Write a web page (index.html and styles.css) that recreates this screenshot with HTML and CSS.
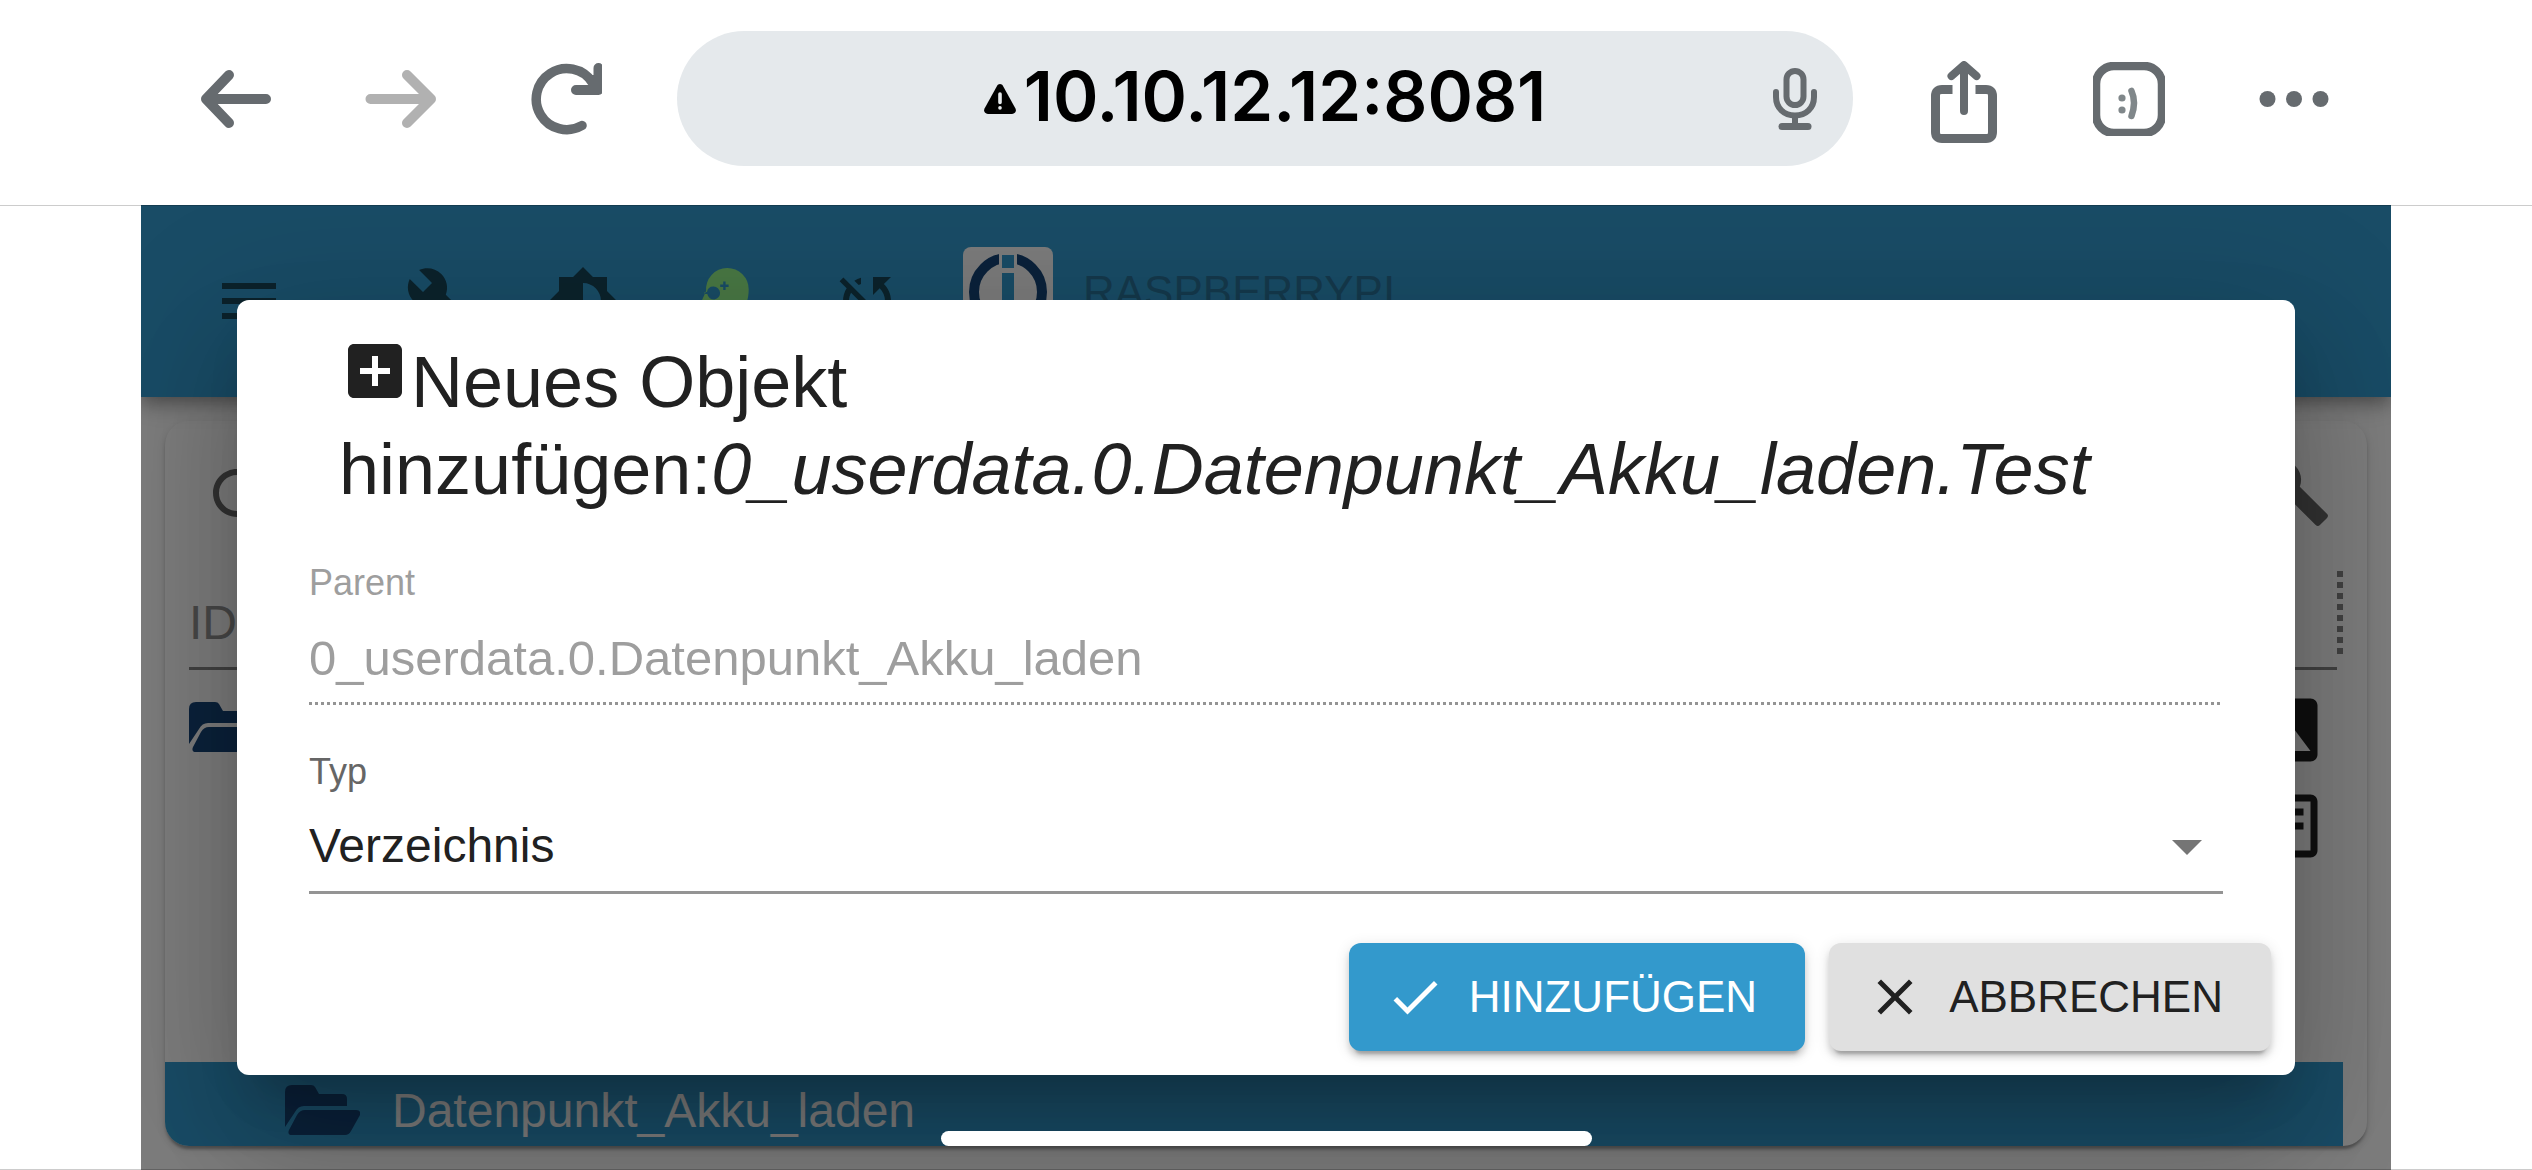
FILE: index.html
```html
<!DOCTYPE html>
<html lang="de">
<head>
<meta charset="utf-8">
<meta name="viewport" content="width=device-width, initial-scale=1">
<title>Neues Objekt hinzufügen</title>
<link rel="stylesheet" href="styles.css">
</head>
<body>
<header class="browser-bar">
  <nav class="browser-group" aria-label="Navigation">
    <button class="browser-button" type="button" aria-label="Zurück">
      <svg viewBox="0 0 72 72" class="line-icon"><path d="M66 36H6M29 12L6 36l23 24" /></svg>
    </button>
    <button class="browser-button is-inactive" type="button" aria-label="Vorwärts">
      <svg viewBox="0 0 72 72" class="line-icon"><path d="M5.500 36H66M42 12l24 24-24 24" /></svg>
    </button>
    <button class="browser-button" type="button" aria-label="Neu laden">
      <svg viewBox="0 0 72 72" class="line-icon"><path d="M52 62.500A30.500 30.500 0 1 1 62 19" stroke-width="9.500"/><path d="M46 27h22.500V5" /><path d="M60 12l9 0v16l-9 0z" fill="currentColor" stroke="none"/></svg>
    </button>
  </nav>
  <div class="address">
    <button class="address-text" type="button">
      <svg class="warning-icon" viewBox="0 0 32 30" aria-hidden="true"><path d="M16 0c1.300 0 2.300.7 3 1.900l12.300 22.300c1.500 2.800-.1 5.800-3.200 5.800H3.900C.8 30-.8 27 .7 24.200L13 1.900C13.700.7 14.700 0 16 0z"/><path d="M16 10v8.500M16 23.700v.2" stroke="#e5e9ec" stroke-width="3.600" stroke-linecap="round"/></svg>
      <span>10.10.12.12:8081</span>
    </button>
    <button class="mic-button" type="button" aria-label="Spracheingabe">
      <svg viewBox="0 0 44 62"><g fill="none" stroke="currentColor" stroke-width="6" stroke-linecap="round"><rect x="13.500" y="3" width="17" height="34" rx="8.500"/><path d="M3 24v5c0 11 8 18.500 19 18.500S41 40 41 29v-5M22 48v8"/><path d="M9 58.500h26" stroke-width="7"/></g></svg>
    </button>
  </div>
  <div class="browser-group">
    <button class="browser-button" type="button" aria-label="Teilen">
      <svg viewBox="0 0 72 82" class="share-icon"><path d="M24.500 28.500H14q-6.500 0-6.500 6.500v36q0 6.500 6.500 6.500h44q6.500 0 6.500-6.500V35q0-6.500-6.500-6.500H47.500" stroke-width="9" stroke-linecap="butt"/><path d="M36 50V6M23.500 15L36 4l12.500 11" stroke-width="8"/></svg>
    </button>
    <button class="browser-button" type="button" aria-label="Tabs">
      <svg viewBox="1 1 72 74"><rect x="4" y="5" width="66" height="67" rx="18" fill="none" stroke="currentColor" stroke-width="8.500"/><g fill="#80878a"><circle cx="30" cy="37" r="3.600"/><circle cx="30" cy="49" r="3.600"/><path d="M39.500 30q5 11 0 25" fill="none" stroke="#80878a" stroke-width="6.500" stroke-linecap="round"/></g></svg>
    </button>
    <button class="browser-button" type="button" aria-label="Mehr">
      <svg viewBox="0 0 72 72"><circle cx="9.500" cy="36" r="8"/><circle cx="36" cy="36" r="8"/><circle cx="62.500" cy="36" r="8"/></svg>
    </button>
  </div>
</header>

<main class="viewport">
  <div class="app">
    <header class="app-bar">
      <button class="icon-button" type="button" aria-label="Menü"><svg viewBox="0 0 24 24"><path d="M3 18h18v-2H3v2zm0-5h18v-2H3v2zm0-7v2h18V6H3z"/></svg></button>
      <div class="app-tools">
        <button class="icon-button" type="button" aria-label="Einstellungen"><svg viewBox="0 0 24 24"><path d="M22.700 19l-9.100-9.100c.9-2.300.4-5-1.500-6.900-2-2-5-2.400-7.400-1.300L9 6 6 9 1.600 4.700C.4 7.100.9 10.100 2.900 12.100c1.900 1.900 4.600 2.400 6.900 1.500l9.100 9.100c.4.4 1 .4 1.400 0l2.300-2.300c.5-.4.5-1.100.1-1.400z"/></svg></button>
        <button class="icon-button" type="button" aria-label="Farbschema"><svg viewBox="0 0 24 24"><path d="M20 15.310L23.310 12 20 8.690V4h-4.690L12 .69 8.690 4H4v4.690L.69 12 4 15.310V20h4.690L12 23.310 15.310 20H20v-4.690zM12 18V6c3.310 0 6 2.690 6 6s-2.690 6-6 6z"/></svg></button>
        <button class="icon-button is-expert" type="button" aria-label="Expertenmodus"><svg viewBox="0 0 24 24"><path fill-rule="evenodd" d="M12.700 1a7.100 7.100 0 0 0-7 7.700L4 12.500c-.2.500 0 1 .6 1H6v3c0 1.100.9 2 2 2h1V23h8v-6.500c1.700-1.800 2.900-4.800 2.900-8.300A7.100 7.100 0 0 0 12.700 1zM8.100 7.200a2.150 2.150 0 1 1-2 2.500H5.200V9h.8a2.150 2.150 0 0 1 2.100-1.800zM11.400 5.500h.8v1h1v.8h-1v1h-.8v-1h-1v-.8h1z"/></svg></button>
        <button class="icon-button" type="button" aria-label="Synchronisierung aus"><svg viewBox="0 0 24 24"><path d="M10 6.350V4.260c-.8.21-1.550.54-2.230.96l1.460 1.460c.25-.12.5-.24.77-.33zm-7.140-.94l2.360 2.360C4.450 8.990 4 10.440 4 12c0 2.210.91 4.200 2.360 5.640L4 20h6v-6l-2.240 2.240C6.680 15.150 6 13.660 6 12c0-1 .25-1.940.68-2.770l8.080 8.080c-.25.13-.5.25-.77.34v2.090c.8-.21 1.550-.54 2.230-.96l2.360 2.360 1.270-1.270L4.140 4.140 2.860 5.410zM20 4h-6v6l2.240-2.240C17.320 8.850 18 10.340 18 12c0 1-.25 1.940-.68 2.770l1.460 1.460C19.550 15.010 20 13.560 20 12c0-2.210-.91-4.200-2.360-5.640L20 4z"/></svg></button>
      </div>
      <a class="host" href="#">
        <svg class="host-logo" viewBox="0 0 90 90" aria-hidden="true"><rect width="90" height="90" rx="8" fill="#f6f6f6"/><circle cx="45" cy="45" r="34" fill="none" stroke="#164477" stroke-width="10"/><path fill="#f6f6f6" d="M36 2h18v20H36z"/><path fill="#3399cc" d="M39 8h12v13H39zM39 26h12v58H39z"/></svg>
        <span>RASPBERRYPI</span>
      </a>
    </header>
    <section class="panel">
      <div class="panel-tools">
        <button class="icon-button" type="button" aria-label="Aktualisieren"><svg viewBox="0 0 24 24"><path d="M17.650 6.350C16.200 4.900 14.210 4 12 4c-4.420 0-7.990 3.580-7.990 8s3.570 8 7.990 8c3.730 0 6.840-2.550 7.730-6h-2.080c-.82 2.330-3.040 4-5.650 4-3.310 0-6-2.690-6-6s2.690-6 6-6c1.660 0 3.140.69 4.220 1.780L13 11h7V4l-2.350 2.350z"/></svg></button>
        <button class="icon-button" type="button" aria-label="Spalten"><svg viewBox="0 0 24 24"><path d="M22.700 19l-9.100-9.100c.9-2.300.4-5-1.500-6.900-2-2-5-2.400-7.400-1.300L9 6 6 9 1.600 4.700C.4 7.100.9 10.100 2.900 12.100c1.900 1.900 4.600 2.400 6.900 1.500l9.100 9.100c.4.400 1 .4 1.400 0l2.300-2.300c.5-.4.5-1.100.1-1.400z"/></svg></button>
      </div>
      <div class="panel-filter">
        <input class="filter-input" type="text" placeholder="ID" aria-label="ID">
        <span class="column-grip"></span>
      </div>
      <div class="tree">
        <div class="tree-row">
          <svg class="folder" viewBox="0 0 75 50"><path d="M7 0h19q3 0 4 2l4 7h23q5 0 5 5v7H19q-6 0-9 6L0 42V7q0-7 7-7z"/><path d="M20 25h51q5 0 4 5l-9 16q-2 4-6 4H7q-5 0-3-5l8-15q3-5 8-5z"/></svg>
          <svg class="row-icon" viewBox="0 0 24 24"><path d="M21 19V5c0-1.100-.9-2-2-2H5c-1.100 0-2 .9-2 2v14c0 1.100.9 2 2 2h14c1.100 0 2-.9 2-2zM8.500 13.500l2.500 3.010L14.500 12l4.500 6H5l3.500-4.500z"/></svg>
        </div>
        <div class="tree-row">
          <svg class="row-icon" viewBox="0 0 24 24"><path d="M19 5v14H5V5h14m0-2H5c-1.100 0-2 .9-2 2v14c0 1.100.9 2 2 2h14c1.100 0 2-.9 2-2V5c0-1.100-.9-2-2-2zM14 17H7v-2h7v2zm3-4H7v-2h10v2zm0-4H7V7h10v2z"/></svg>
        </div>
      </div>
      <div class="tree-row is-selected">
        <svg class="folder" viewBox="0 0 75 50"><path d="M7 0h19q3 0 4 2l4 7h23q5 0 5 5v7H19q-6 0-9 6L0 42V7q0-7 7-7z"/><path d="M20 25h51q5 0 4 5l-9 16q-2 4-6 4H7q-5 0-3-5l8-15q3-5 8-5z"/></svg>
        <span>Datenpunkt_Akku_laden</span>
      </div>
    </section>

    <div class="backdrop">
      <form class="dialog" role="dialog" aria-labelledby="dialog-title">
        <h2 class="dialog-title" id="dialog-title"><svg class="title-icon" viewBox="0 0 24 24"><path d="M19 3H5c-1.110 0-2 .9-2 2v14c0 1.100.89 2 2 2h14c1.100 0 2-.9 2-2V5c0-1.100-.9-2-2-2zm-2 10h-4v4h-2v-4H7v-2h4V7h2v4h4v2z"/></svg>Neues Objekt hinzufügen:<i>0_userdata.0.Datenpunkt_Akku_laden.Test</i></h2>
        <div class="dialog-content">
          <div class="field is-disabled">
            <label for="parent">Parent</label>
            <input class="control" id="parent" type="text" value="0_userdata.0.Datenpunkt_Akku_laden" disabled>
          </div>
          <div class="field">
            <label for="type">Typ</label>
            <div class="select-wrap">
              <select class="control" id="type"><option>Verzeichnis</option></select>
              <svg class="select-arrow" viewBox="0 0 24 24"><path d="M7 10l5 5 5-5z"/></svg>
            </div>
          </div>
        </div>
        <div class="dialog-actions">
          <button class="button is-primary" type="submit"><svg viewBox="0 0 24 24"><path d="M9 16.170L4.830 12l-1.420 1.410L9 19 21 7l-1.410-1.410z"/></svg>HINZUFÜGEN</button>
          <button class="button" type="button"><svg viewBox="0 0 24 24"><path d="M19 6.410L17.590 5 12 10.590 6.410 5 5 6.410 10.590 12 5 17.590 6.410 19 12 13.410 17.590 19 19 17.590 13.410 12z"/></svg>ABBRECHEN</button>
        </div>
      </form>
    </div>
  </div>
  <div class="home-indicator"></div>
</main>
</body>
</html>
```
FILE: styles.css
```css
* {
  box-sizing: border-box;
}

body {
  margin: 0;
  min-height: 100vh;
  display: flex;
  flex-direction: column;
  background: #fff;
  color: #212121;
  font-family: "Liberation Sans", Arial, sans-serif;
}

button,
input,
select {
  margin: 0;
  padding: 0;
  border: 0;
  background: none;
  color: inherit;
  font: inherit;
}

svg {
  display: block;
  flex: none;
  fill: currentColor;
}

/* Browser bar */

.browser-bar {
  position: relative;
  z-index: 1;
  flex: none;
  height: 205px;
  padding: 0 202px 8px 200px;
  display: flex;
  align-items: center;
  gap: 75px;
  color: #666b6f;
  box-shadow: 0 1px 0 rgba(0, 0, 0, 0.2);
}

.browser-group {
  display: flex;
  align-items: center;
  gap: 93px;
}

.browser-button {
  width: 72px;
  height: 82px;
  display: grid;
  place-items: center;
}

.browser-button svg {
  width: 72px;
}

.line-icon,
.share-icon {
  fill: none;
  stroke: currentColor;
  stroke-width: 10;
  stroke-linecap: round;
  stroke-linejoin: round;
}

.share-icon {
  margin-top: 7px;
}

.is-inactive {
  color: #b1b1b1;
}

.address {
  flex: 1;
  height: 135px;
  padding: 0 36px;
  display: grid;
  grid-template-columns: 1fr auto 1fr;
  align-items: center;
  border-radius: 68px;
  background: #e5e9ec;
}

.address-text {
  grid-column: 2;
  display: flex;
  align-items: center;
  gap: 8px;
  color: #000;
  font: 600 69px/80px Inter, sans-serif;
}

.address-text span {
  margin-bottom: 6px;
}

.warning-icon {
  width: 32px;
  height: 30px;
}

.mic-button {
  justify-self: end;
}

.mic-button svg {
  width: 44px;
  height: 62px;
}

/* Application behind the dialog */

.viewport {
  position: relative;
  flex: 1;
  padding: 0 141px;
  display: flex;
}

.app {
  position: relative;
  flex: 1;
  display: flex;
  flex-direction: column;
  overflow: hidden;
  background: #fafafa;
}

.app-bar {
  position: relative;
  flex: none;
  height: 192px;
  padding: 0 72px;
  display: flex;
  align-items: center;
  background: #39c;
  box-shadow: 0 6px 12px -3px rgba(0, 0, 0, 0.2), 0 12px 15px 0 rgba(0, 0, 0, 0.14), 0 3px 30px 0 rgba(0, 0, 0, 0.12);
  color: #184659;
}

.icon-button svg {
  width: 72px;
  height: 72px;
}

.app-tools {
  margin-left: 120px;
  display: flex;
  gap: 70px;
}

.is-expert {
  color: #92f088;
}

.host {
  margin: 0 0 18px 60px;
  display: flex;
  align-items: center;
  gap: 30px;
  color: #2b7399;
  font-size: 44px;
  line-height: 48px;
  text-decoration: none;
}

.host-logo {
  width: 90px;
  height: 90px;
}

.panel {
  flex: 1;
  margin: 24px;
  display: flex;
  flex-direction: column;
  overflow: hidden;
  border-radius: 24px;
  box-shadow: 0 6px 3px -3px rgba(0, 0, 0, 0.2), 0 3px 3px 0 rgba(0, 0, 0, 0.14), 0 3px 9px 0 rgba(0, 0, 0, 0.12);
}

.panel-tools {
  height: 144px;
  padding: 0 36px;
  display: flex;
  align-items: center;
  justify-content: space-between;
  color: #666;
}

.panel-filter {
  height: 105px;
  padding: 0 24px;
  display: flex;
}

.filter-input {
  flex: 1;
  min-width: 0;
  padding: 16px 0 3px;
  border-bottom: 3px solid #858585;
  font-size: 48px;
}

.filter-input::placeholder {
  color: #919191;
  opacity: 1;
}

.column-grip {
  width: 6px;
  height: 84px;
  margin-top: 6px;
  background: repeating-linear-gradient(#858585 0 6px, transparent 6px 11px);
}

.tree {
  flex: 1;
  padding: 12px 39px 0 24px;
}

.tree-row {
  height: 96px;
  display: flex;
  align-items: center;
}

.folder {
  width: 75px;
  height: 50px;
  color: #164477;
}

.tree .folder {
  margin-bottom: 6px;
}

.row-icon {
  width: 84px;
  height: 84px;
  margin-left: auto;
}

.tree-row.is-selected {
  height: 84px;
  margin-right: 24px;
  padding: 12px 120px 0;
  gap: 32px;
  background: #39c;
  color: #fafafa;
  font-size: 48px;
}

/* Dialog */

.backdrop {
  position: absolute;
  inset: 0;
  padding: 0 96px;
  display: flex;
  align-items: center;
  justify-content: center;
  background: rgba(0, 0, 0, 0.5);
}

.dialog {
  flex: 1;
  border-radius: 12px;
  background: #fff;
  box-shadow: 0 33px 45px -21px rgba(0, 0, 0, 0.2), 0 72px 114px 9px rgba(0, 0, 0, 0.14), 0 27px 138px 24px rgba(0, 0, 0, 0.12);
}

.dialog-title {
  margin: 0;
  padding: 35px 102px 0;
  font-size: 72px;
  font-weight: 400;
  line-height: 87px;
}

.title-icon {
  display: inline;
  width: 72px;
  height: 72px;
}

.dialog-content {
  padding: 49px 72px;
  display: grid;
  gap: 46px;
}

.field {
  display: flex;
  flex-direction: column;
  gap: 25px;
}

.field label {
  color: #666;
  font-size: 36px;
  line-height: 42px;
}

.control {
  display: block;
  width: 100%;
  height: 76px;
  padding-bottom: 18px;
  border-bottom: 3px solid #949494;
  border-radius: 0;
  appearance: none;
  font-size: 48px;
}

.select-wrap {
  position: relative;
}

.select-arrow {
  position: absolute;
  top: -8px;
  right: 0;
  width: 72px;
  height: 72px;
  color: #757575;
  pointer-events: none;
}

.is-disabled label {
  color: #9e9e9e;
}

.is-disabled .control {
  border-bottom: 0;
  padding-bottom: 19px;
  background: repeating-linear-gradient(90deg, #949494 0 3px, transparent 3px 6px) bottom / 100% 3px no-repeat;
  color: #9e9e9e;
  font-size: 49px;
}

.dialog-actions {
  padding: 0 24px 24px;
  display: flex;
  justify-content: flex-end;
  gap: 24px;
}

.button {
  height: 108px;
  padding: 0 48px 0 36px;
  display: flex;
  align-items: center;
  gap: 24px;
  border-radius: 12px;
  background: #e0e0e0;
  font-size: 44px;
  box-shadow: 0 9px 3px -6px rgba(0, 0, 0, 0.2), 0 6px 6px 0 rgba(0, 0, 0, 0.14), 0 3px 15px 0 rgba(0, 0, 0, 0.12);
}

.button svg {
  width: 60px;
  height: 60px;
}

.button.is-primary {
  background: #39c;
  color: #fff;
}

.home-indicator {
  position: absolute;
  inset: auto 0 0;
  height: 39px;
  border-bottom: 1px solid rgba(0, 0, 0, 0.2);
}

.home-indicator::before {
  content: "";
  display: block;
  width: 651px;
  height: 15px;
  margin: 0 auto;
  border-radius: 8px;
  background: #fff;
}
```
